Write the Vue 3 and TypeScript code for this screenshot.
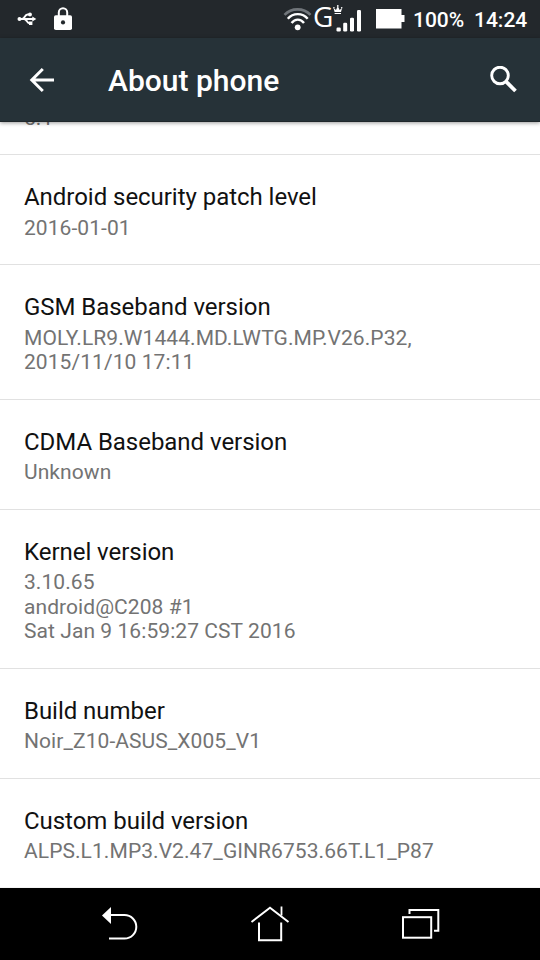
<script setup lang="ts">
interface InfoItem {
  title: string
  lines: string[]
}

// The list is scrolled to its end, so the first entry shows only its last line.
const items: InfoItem[] = [
  { title: '', lines: ['5.1'] },
  { title: 'Android security patch level', lines: ['2016-01-01'] },
  { title: 'GSM Baseband version', lines: ['MOLY.LR9.W1444.MD.LWTG.MP.V26.P32,', '2015/11/10 17:11'] },
  { title: 'CDMA Baseband version', lines: ['Unknown'] },
  { title: 'Kernel version', lines: ['3.10.65', 'android@C208 #1', 'Sat Jan 9 16:59:27 CST 2016'] },
  { title: 'Build number', lines: ['Noir_Z10-ASUS_X005_V1'] },
  { title: 'Custom build version', lines: ['ALPS.L1.MP3.V2.47_GINR6753.66T.L1_P87'] },
]
</script>

<template>
  <div class="phone">
    <div class="status">
      <svg class="usb" width="20" height="14" viewBox="0 0 20 14" fill="none" stroke="#fff" stroke-width="1.900">
        <path d="M2 7H16M5 7C8 7 7.500 2.500 10.500 2.500H13M7 7C10 7 9.500 11.200 12.500 11.200H14" />
        <circle cx="2.500" cy="7" r="2" fill="#fff" stroke="none" />
        <circle cx="13" cy="2.500" r="1.900" fill="#fff" stroke="none" />
        <path d="M12 9.500h3.400v3.400h-3.400zM15.300 4.400L19.300 7L15.300 9.600z" fill="#fff" stroke="none" />
      </svg>
      <svg class="lock" width="18" height="24" viewBox="0 0 18 24">
        <path d="M4.800 9V5.500a4.200 4.200 0 0 1 8.400 0V9" fill="none" stroke="#fff" stroke-width="2" />
        <rect y="8.300" width="18" height="14.700" rx="1.800" fill="#fff" />
        <circle cx="9" cy="15.400" r="2.100" fill="#23282c" />
      </svg>
      <div class="spacer"></div>
      <svg class="wifi" width="30" height="26" viewBox="0 0 30 26" fill="none" stroke="#fff" stroke-width="2.400">
        <path d="M1.500 8.900C8.500 1.500 20.500 1.500 27.500 8.900" stroke="#70757a" stroke-width="2.600" />
        <path d="M4.800 12.800C10 6.600 19.500 6.600 24.700 12.800" />
        <path d="M8.600 17C12 12.500 17.600 12.500 21 17" />
        <circle cx="14.700" cy="21.300" r="2.900" fill="#fff" stroke="none" />
      </svg>
      <span class="network">G</span>
      <svg class="signal" width="29" height="28" viewBox="0 0 29 28" fill="#fff">
        <path d="M0.500 4L3 6L4.800 2L6.600 6L9.100 4L8 8H1.600zM1.600 8.900h6.400v1H1.600z" />
        <circle cx="4.800" cy="1.900" r="0.900" />
        <circle cx="0.900" cy="3.700" r="0.800" />
        <circle cx="8.700" cy="3.700" r="0.800" />
        <rect x="3.500" y="23.500" width="4.300" height="4" rx="1.200" />
        <rect x="10.200" y="18.800" width="4" height="8.700" rx="1.200" />
        <rect x="17" y="13.800" width="4" height="13.700" rx="1.200" />
        <rect x="24" y="6" width="4" height="21.500" rx="1.200" />
      </svg>
      <svg class="battery" width="29" height="20" viewBox="0 0 29 20" fill="#fff">
        <path d="M0 0H25.500V6H28.500V13H25.500V19.500H0z" />
      </svg>
      <span class="percent">100%</span>
      <span class="clock">14:24</span>
    </div>

    <header class="toolbar">
      <svg class="back" width="26" height="26" viewBox="0 0 26 26" fill="none" stroke="#fff" stroke-width="3">
        <path d="M25 13H3M13.800 2L2.800 13L13.800 24" />
      </svg>
      <h1>About phone</h1>
      <svg class="search" width="28" height="28" viewBox="0 0 28 28" fill="none" stroke="#fff">
        <circle cx="10" cy="9.500" r="8.300" stroke-width="2.900" />
        <path d="M16 15.500L25.500 25" stroke-width="3.800" />
      </svg>
    </header>

    <main class="viewport">
      <ul class="list">
        <li v-for="(item, index) in items" :key="index" class="item">
          <div v-if="item.title" class="title">{{ item.title }}</div>
          <div v-for="line in item.lines" :key="line" class="summary">{{ line }}</div>
        </li>
      </ul>
    </main>

    <nav class="navbar">
      <svg width="150" height="72" viewBox="0 0 150 72" fill="none" stroke="#fff" stroke-width="2">
        <path d="M50 27H64.500a11.800 11.800 0 0 1 0 23.600H49" />
        <path d="M42 27.500L51 19V36z" fill="#fff" stroke="none" />
      </svg>
      <svg width="150" height="72" viewBox="0 0 150 72" fill="none" stroke="#fff" stroke-width="2">
        <path d="M41.500 34L60 19.800L78.500 34M49 34.500V52.200H71.200V34.500" />
        <path d="M71.500 18.500V27.500" stroke-width="1.800" />
      </svg>
      <svg width="150" height="72" viewBox="0 0 150 72" fill="none" stroke="#fff" stroke-width="2">
        <rect x="43" y="29.200" width="28.200" height="20.500" />
        <path d="M49.500 26V22H78.300V42.700H74" />
      </svg>
    </nav>
  </div>
</template>

<style>
body {
  margin: 0;
}
</style>

<style scoped>
.phone {
  width: 540px;
  height: 960px;
  display: flex;
  flex-direction: column;
  overflow: hidden;
  background: #fff;
  color: #111;
  font-family: Roboto, sans-serif;
}
.status {
  height: 38px;
  flex: none;
  display: flex;
  align-items: flex-start;
  background: #23282c;
  color: #fff;
}
.spacer {
  flex: 1;
}
.usb {
  margin: 12px 0 0 17px;
}
.lock {
  margin: 7px 0 0 17px;
}
.wifi {
  margin: 6px 0 0;
}
.network {
  width: 20px;
  font: 28px/32px "Open Sans", sans-serif;
}
.signal {
  margin: 4px 0 0 0;
}
.battery {
  margin: 9px 0 0 14px;
}
.percent,
.clock {
  font-weight: 500;
  font-size: 21px;
  line-height: 40px;
}
.percent {
  width: 51px;
  margin-left: 8px;
}
.clock {
  width: 54px;
  margin: 0 12px 0 10px;
}
.toolbar {
  height: 84px;
  flex: none;
  display: flex;
  align-items: center;
  box-sizing: border-box;
  padding: 0 22px 0 29px;
  position: relative;
  z-index: 1;
  background: #263238;
  border-bottom: 1px solid #20272b;
  box-shadow: 0 1px 4px rgba(0, 0, 0, 0.4);
  color: #fff;
}
.toolbar h1 {
  flex: 1;
  margin: 2px 0 0 53px;
  font-size: 30px;
  font-weight: 500;
  line-height: 36px;
}
.viewport {
  flex: 1;
  min-height: 0;
  overflow: hidden;
  display: flex;
  flex-direction: column;
  justify-content: flex-end;
}
.list {
  margin: 0;
  padding: 0;
  list-style: none;
}
.item {
  padding: 27.6px 24px 24.2px;
  border-bottom: 1px solid #e1e1e1;
}
.item:last-child {
  padding-bottom: 23.2px;
  border-bottom-color: #f4f4f4;
}
.title {
  margin-bottom: 4.2px;
  font-size: 24px;
  line-height: 28.4px;
  letter-spacing: -0.04px;
}
.summary {
  font-size: 21px;
  line-height: 24.6px;
  letter-spacing: 0.07px;
  color: #737373;
  white-space: nowrap;
}
.navbar {
  height: 72px;
  flex: none;
  display: flex;
  justify-content: center;
  padding-left: 30px;
  background: #000;
}
.navbar svg {
  flex: none;
}
</style>
